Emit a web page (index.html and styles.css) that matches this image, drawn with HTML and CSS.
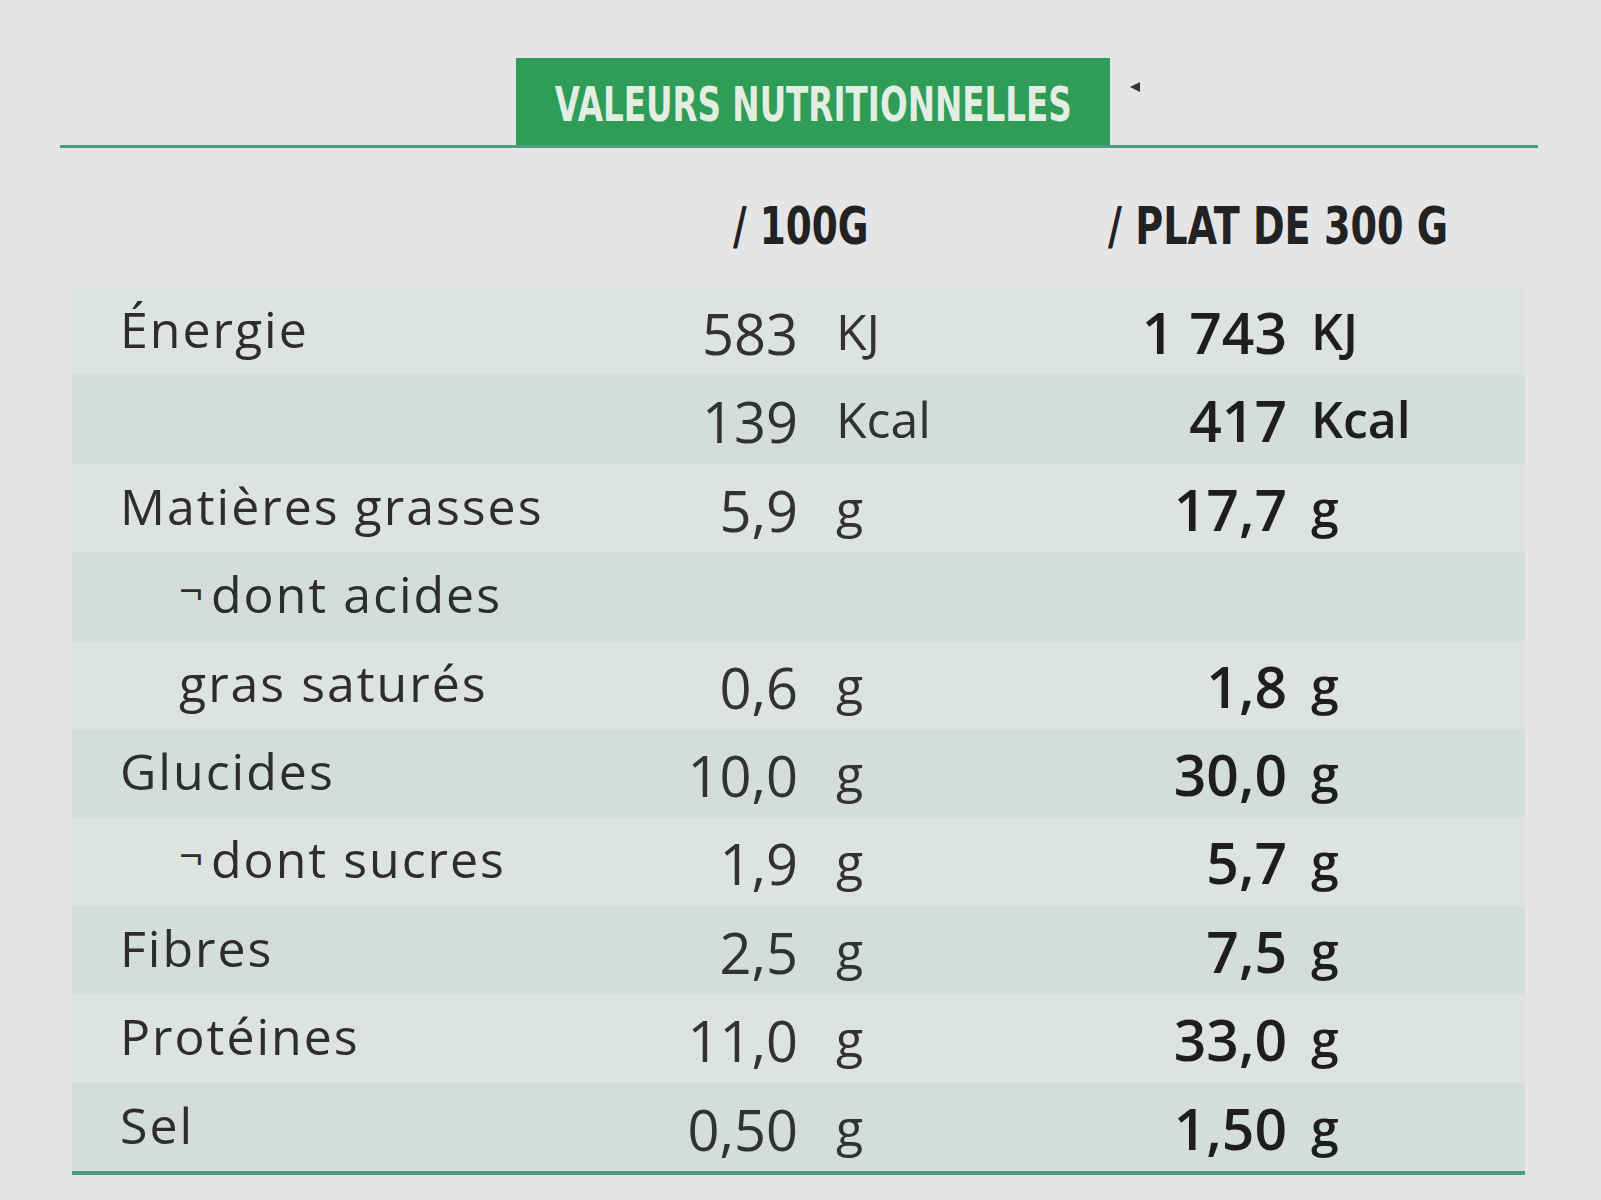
FILE: index.html
```html
<!DOCTYPE html>
<html lang="fr">
<head>
<meta charset="utf-8">
<title>Valeurs nutritionnelles</title>
<link rel="stylesheet" href="styles.css">
</head>
<body>
<div class="label">
  <div class="title-bar">
    <div class="tab"><span class="tab-text">VALEURS NUTRITIONNELLES</span></div>
    <span class="mark"></span>
  </div>
  <div class="table">
    <div class="head">
      <span class="h h1">/ 100G</span>
      <span class="h h2">/ PLAT DE 300 G</span>
    </div>
    <div class="row">
      <div class="lab">Énergie</div><div class="v1">583</div><div class="u1">KJ</div><div class="v2">1 743</div><div class="u2">KJ</div>
    </div>
    <div class="row">
      <div class="lab"></div><div class="v1">139</div><div class="u1">Kcal</div><div class="v2">417</div><div class="u2">Kcal</div>
    </div>
    <div class="row">
      <div class="lab">Matières grasses</div><div class="v1">5,9</div><div class="u1">g</div><div class="v2">17,7</div><div class="u2">g</div>
    </div>
    <div class="row">
      <div class="lab sub"><span class="neg">¬</span>dont acides</div><div class="v1"></div><div class="u1"></div><div class="v2"></div><div class="u2"></div>
    </div>
    <div class="row">
      <div class="lab sub">gras saturés</div><div class="v1">0,6</div><div class="u1">g</div><div class="v2">1,8</div><div class="u2">g</div>
    </div>
    <div class="row">
      <div class="lab">Glucides</div><div class="v1">10,0</div><div class="u1">g</div><div class="v2">30,0</div><div class="u2">g</div>
    </div>
    <div class="row">
      <div class="lab sub"><span class="neg">¬</span>dont sucres</div><div class="v1">1,9</div><div class="u1">g</div><div class="v2">5,7</div><div class="u2">g</div>
    </div>
    <div class="row">
      <div class="lab">Fibres</div><div class="v1">2,5</div><div class="u1">g</div><div class="v2">7,5</div><div class="u2">g</div>
    </div>
    <div class="row">
      <div class="lab">Protéines</div><div class="v1">11,0</div><div class="u1">g</div><div class="v2">33,0</div><div class="u2">g</div>
    </div>
    <div class="row">
      <div class="lab">Sel</div><div class="v1">0,50</div><div class="u1">g</div><div class="v2">1,50</div><div class="u2">g</div>
    </div>
  </div>
</div>
</body>
</html>
```
FILE: styles.css
```css
html, body {
  margin: 0;
  padding: 0;
}
body {
  background: #e5e4e7;
  width: 1601px;
  height: 1200px;
  overflow: hidden;
  font-family: "Open Sans", "DejaVu Sans", sans-serif;
  color: #2b2b2b;
}
.label {
  padding-top: 58px;
}
.title-bar {
  margin-left: 60px;
  width: 1478px;
  height: 87px;
  border-bottom: 3px solid #4d9b80;
  display: flex;
  align-items: flex-start;
}
.tab {
  margin-left: 456px;
  width: 594px;
  height: 87px;
  background: #2f9c57;
  display: flex;
  justify-content: center;
  padding-top: 22px;
  box-sizing: border-box;
}
.tab-text {
  display: block;
  flex: none;
  font-family: "DejaVu Sans Condensed", "DejaVu Sans", sans-serif;
  font-stretch: condensed;
  font-weight: bold;
  font-size: 48px;
  line-height: 1;
  color: #e2eee2;
  transform: scaleX(0.755);
  transform-origin: center;
  white-space: nowrap;
}
.mark {
  margin-left: 20px;
  margin-top: 24px;
  width: 0;
  height: 0;
  border-top: 5px solid transparent;
  border-bottom: 5px solid transparent;
  border-right: 10px solid #3a3436;
}
.table {
  margin-left: 72px;
  width: 1453px;
  border-bottom: 4px solid #4d9b80;
}
.head {
  height: 139px;
  box-sizing: border-box;
  padding-top: 52px;
  padding-left: 661px;
  display: flex;
}
.h {
  display: block;
  font-family: "DejaVu Sans Condensed", "DejaVu Sans", sans-serif;
  font-stretch: condensed;
  font-weight: bold;
  font-size: 52px;
  line-height: 1;
  color: #222;
  transform: scaleX(0.80);
  transform-origin: left;
  white-space: nowrap;
}
.h1 {
  width: 375px;
  flex: none;
}
.h2 {
  transform: scaleX(0.815);
}
.row {
  display: grid;
  grid-template-columns: 470px 256px 243px 246px 1fr;
  height: 88.4px;
  background: #dee3e0;
}
.row:nth-child(odd) {
  background: #d5ddd8;
}
.lab {
  padding-top: 17px;
  padding-left: 48px;
  font-size: 50px;
  letter-spacing: 2px;
  line-height: 1;
  color: #2d2d2d;
  white-space: nowrap;
}
.lab.sub {
  padding-left: 107px;
}
.neg {
  font-size: 42px;
  margin-right: 6px;
  position: relative;
  top: -8px;
}
.v1 {
  padding-top: 18px;
  text-align: right;
  font-size: 56px;
  line-height: 1;
  color: #323232;
}
.u1 {
  padding-top: 19px;
  padding-left: 38px;
  font-size: 50px;
  line-height: 1;
  color: #323232;
}
.v2 {
  padding-top: 17px;
  text-align: right;
  font-size: 57px;
  font-weight: 600;
  line-height: 1;
  color: #1e1e1e;
}
.u2 {
  padding-top: 19px;
  padding-left: 24px;
  font-size: 50px;
  font-weight: 600;
  line-height: 1;
  color: #1e1e1e;
}
```
